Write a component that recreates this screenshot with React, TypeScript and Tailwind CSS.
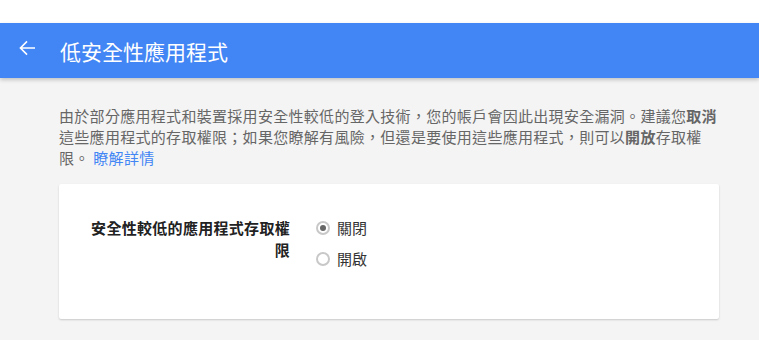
import { useState } from "react"

const font = { fontFamily: '"Noto Sans CJK TC", "Noto Sans", sans-serif' }

function Radio({ checked, label, onClick }: { checked: boolean; label: string; onClick: () => void }) {
  return (
    <button onClick={onClick} className="flex h-[22px] items-center gap-[7px] text-left">
      <span className="flex h-[14px] w-[14px] items-center justify-center rounded-full border-2 border-[#c8c8c8] bg-white">
        {checked && <span className="h-[6px] w-[6px] rounded-full bg-[#666]" />}
      </span>
      <span className="text-[15px] leading-[22px] text-[#333]">{label}</span>
    </button>
  )
}

export default function App() {
  const [on, setOn] = useState(false)

  return (
    <div className="min-h-screen bg-[#f4f4f4]" style={font}>
      <div className="h-[23px] bg-white" />

      {/* Header */}
      <header className="flex h-[55px] items-center bg-[#4285f4] shadow-[0_2px_4px_rgba(0,0,0,0.2)]">
        <svg viewBox="0 0 24 24" className="mb-[5px] ml-[15px] h-[24px] w-[24px] fill-white">
          <path d="M20 11.2H7.3l5.3-5.3L11.5 4.8 4.3 12l7.2 7.2 1.1-1.1-5.3-5.3H20z" />
        </svg>
        <h1 className="ml-[21px] mt-[3px] text-[21px] font-normal text-white">低安全性應用程式</h1>
      </header>

      {/* Content */}
      <main className="pl-[59px] pr-[40px] pt-[27px]">
        <p className="text-[15px] leading-[21px] tracking-[0.3px] text-[#666]">
          由於部分應用程式和裝置採用安全性較低的登入技術，您的帳戶會因此出現安全漏洞。建議您<b>取消</b>這些應用程式的存取權限；如果您瞭解有風險，但還是要使用這些應用程式，則可以<b>開放</b>存取權限。{" "}
          <a href="#" className="text-[#4285f4]">瞭解詳情</a>
        </p>

        <div className="mt-[16px] flex rounded-[2px] bg-white pb-[49px] pt-[33px] shadow-[0_1px_2px_rgba(0,0,0,0.18)]">
          <div className="w-[231px] shrink-0 pl-[31px] text-right text-[15px] font-bold leading-[22px] tracking-[0.3px] text-[#222]">
            安全性較低的應用程式存取權限
          </div>
          <div className="ml-[26px] flex flex-col gap-[9px]">
            <Radio checked={!on} label="關閉" onClick={() => setOn(false)} />
            <Radio checked={on} label="開啟" onClick={() => setOn(true)} />
          </div>
        </div>
      </main>
    </div>
  )
}
